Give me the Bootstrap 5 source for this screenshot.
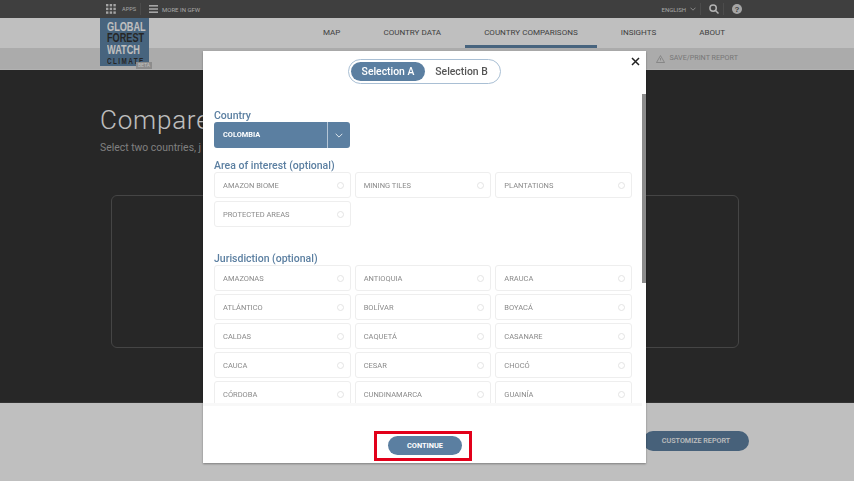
<!DOCTYPE html>
<html>
<head>
    <meta charset="utf-8">
    <title>Global Forest Watch Climate</title>
    <link rel="stylesheet" href="https://cdn.jsdelivr.net/npm/bootstrap@5.3.0/dist/css/bootstrap.min.css">
    <style>
        html, body { height: 100%; }
        body { font-family: Roboto, "Noto Sans", sans-serif; background: #343434; overflow: hidden; }
        .page-wrap { height: 481px; }
        .top-bar { height: 18px; background: #555; padding: 0 112px 0 106px; color: #ddd; font-size: 6px; }
        .top-sep { width: 1px; height: 12px; background: #666; }
        .apps-label { margin-left: 6px; font-size: 5.6px; }
        .main-nav { height: 30px; background: #fff; padding-left: 100px; }
        .logo-box { width: 49px; height: 48px; background: #5f86a8; padding: 4px 0 0 7px; z-index: 2; }
        .logo-text { color: #fff; font-family: "Liberation Sans", sans-serif; font-size: 12.4px; line-height: 11.3px; transform: scaleX(.74); transform-origin: left top; width: 54px; }
        .logo-text b { display: block; font-weight: 700; }
        .logo-text .logo-dark { color: #333; }
        .logo-text .logo-sub { color: #333; font-size: 8.6px; letter-spacing: 1.9px; line-height: 10px; }
        .beta-tag { position: absolute; left: 36px; bottom: -3px; width: 16px; height: 7px; background: #bbb; color: #fff; font-size: 5px; line-height: 7px; text-align: center; }
        .nav-links { margin-left: 155px; }
        .nav-links a { display: block; height: 30px; line-height: 30px; padding: 0 19px; margin-right: 5px; color: #555; font-size: 8.05px; font-weight: 400; text-decoration: none; white-space: nowrap; }
        .nav-links a.active { border-bottom: 3px solid #5f86a8; }
        .sub-bar { height: 22px; background: #e5e5e5; border-bottom: 1px solid #eee; padding-right: 116px; color: #a0a0a0; font-size: 7.2px; font-weight: 400; }
        .dark-part { height: 333px; background: #343434; padding: 34px 0 0 100px; border-bottom: 1px solid #444; }
        .dark-part h1 { width: fit-content; white-space: nowrap; font-size: 26px; font-weight: 300; color: #fff; margin: 0; line-height: 32px; letter-spacing: .8px; }
        .dark-part p { width: fit-content; white-space: nowrap; font-size: 10.4px; color: #aaa; margin: 4px 0 0; line-height: 16px; }
        .map-box { width: 628px; height: 153px; margin: 39px 0 0 11px; border: 1px solid #5c5c5c; border-radius: 6px; }
        .bottom-part { height: 78px; background: #fff; padding: 28px 105px 0 0; }
        .customize-btn { width: 106px; height: 20px; padding: 0; border: 0; border-radius: 10px; background: #5f82a3; color: #fff; font-size: 7.2px; font-weight: 500; line-height: 20px; text-align: center; }
        .modal-backdrop.show { opacity: .25; }
        .pick-dialog { position: absolute; left: 203px; top: 51px; width: 443px; height: 412px; }
        .pick-dialog .modal-content { height: 100%; border: 0; border-radius: 0; box-shadow: 0 1px 2px rgba(0,0,0,.35); }
        .sel-toggle { width: 153px; height: 25px; margin: 8px auto 0; padding: 2px; border: 1px solid #a9bfd4; border-radius: 13px; }
        .sel-toggle span { flex: 1; border-radius: 10px; font-size: 10.4px; line-height: 19px; text-align: center; color: #555; font-weight: 500; }
        .sel-toggle span.on { flex: 0 0 74px; background: #5b7fa1; color: #fff; font-weight: 500; }
        .close-x { position: absolute; right: 6px; top: 6px; width: 9px; height: 9px; }
        .scroll-area { position: absolute; top: 40px; left: 0; right: 0; bottom: 60px; overflow: hidden; padding: 17px 14px 0 11px; }
        .fake-bar { position: absolute; right: 0; top: 3px; width: 4px; height: 189px; background: #8c8c8c; }
        .field-title { font-size: 10.5px; line-height: 13px; padding-top: 1px; font-weight: 500; color: #5b7fa1; }
        .field-title.area-title { margin-top: 10px; }
        .field-title.jur-title { margin-top: 24px; }
        .country-sel { width: 136px; height: 26px; background: #5b7fa1; border-radius: 3px; color: #fff; font-size: 7.4px; font-weight: 700; }
        .country-name { flex: 1; padding-left: 9px; line-height: 26px; }
        .country-arrow { width: 23px; border-left: 1px solid #b5c6d6; text-align: center; height: 26px; }
        .chip-grid { display: grid; grid-template-columns: repeat(3, 136.67px); column-gap: 4px; row-gap: 3px; }
        .chip-item { height: 26px; padding: 1px 6px 0 8px; border: 1px solid #eee; border-radius: 3px; color: #8a8a8a; font-size: 7.5px; font-weight: 400; }
        .chip-dot { width: 7px; height: 7px; border: 1px solid #e4e4e4; border-radius: 50%; }
        .foot-area { position: absolute; left: 0; right: 0; bottom: 0; height: 60px; border-top: 3px solid #f8f8f8; margin-right: 4px; }
        .continue-box { position: absolute; left: 171px; top: 25px; width: 98px; height: 30px; border: 3px solid #e2001a; padding: 2px 11px; }
        .continue-btn { display: block; width: 74px; height: 19px; padding: 1px 0 0; border: 0; border-radius: 10px; background: #5b7fa1; color: #fff; font-size: 7.4px; font-weight: 700; line-height: 18px; }
    </style>
</head>
<body>
    <div class="page-wrap">
        <!-- top bar -->
        <div class="top-bar d-flex align-items-center">
            <svg width="10" height="10" viewBox="0 0 10 10" fill="#ddd">
                <rect x="0" y="0" width="2.4" height="2.4"/><rect x="3.7" y="0" width="2.4" height="2.4"/><rect x="7.4" y="0" width="2.4" height="2.4"/>
                <rect x="0" y="3.7" width="2.4" height="2.4"/><rect x="3.7" y="3.7" width="2.4" height="2.4"/><rect x="7.4" y="3.7" width="2.4" height="2.4"/>
                <rect x="0" y="7.4" width="2.4" height="2.4"/><rect x="3.7" y="7.4" width="2.4" height="2.4"/><rect x="7.4" y="7.4" width="2.4" height="2.4"/>
            </svg>
            <span class="apps-label">APPS</span>
            <span class="top-sep ms-1"></span>
            <svg class="ms-2" width="9" height="8" viewBox="0 0 9 8" fill="#ddd"><rect width="9" height="1.6"/><rect y="3.2" width="9" height="1.6"/><rect y="6.4" width="9" height="1.6"/></svg>
            <span class="ms-1">MORE IN GFW</span>
            <span class="ms-auto">ENGLISH</span>
            <svg class="ms-1" width="6" height="4" viewBox="0 0 6 4" fill="none" stroke="#ddd" stroke-width=".7"><path d="M.5.7 3 3.2 5.5.7"/></svg>
            <span class="top-sep ms-1"></span>
            <svg class="ms-2" width="10" height="10" viewBox="0 0 10 10" fill="none" stroke="#eee" stroke-width="1.5"><circle cx="4.1" cy="4.1" r="3.2"/><path d="m6.5 6.5 3 3"/></svg>
            <span class="top-sep ms-1"></span>
            <svg class="ms-2" width="10" height="10" viewBox="0 0 10 10"><circle cx="5" cy="5" r="5" fill="#ddd"/><text x="5" y="7.8" text-anchor="middle" font-size="8" font-weight="700" fill="#555" font-family="Liberation Sans">?</text></svg>
        </div>

        <!-- main nav -->
        <div class="main-nav d-flex">
            <div class="logo-box position-relative">
                <div class="logo-text">
                    <b>GLOBAL</b>
                    <b class="logo-dark">FOREST</b>
                    <b>WATCH</b>
                    <b class="logo-sub">CLIMATE</b>
                </div>
                <span class="beta-tag">BETA</span>
            </div>
            <div class="nav-links d-flex">
                <a href="#">MAP</a>
                <a href="#">COUNTRY DATA</a>
                <a href="#" class="active">COUNTRY COMPARISONS</a>
                <a href="#">INSIGHTS</a>
                <a href="#">ABOUT</a>
            </div>
        </div>
        <div class="sub-bar d-flex align-items-center justify-content-end">
            <svg class="me-1" width="9" height="8" viewBox="0 0 9 8" fill="none" stroke="#a0a0a0" stroke-width=".7"><path d="M4.5.6 8.5 7.5H.5Z"/><path d="M4.5 3v2.5"/></svg>
            <span>SAVE/PRINT REPORT</span>
        </div>

        <div class="dark-part">
            <h1>Compare</h1>
            <p>Select two countries, j</p>
            <div class="map-box"></div>
        </div>
        <div class="bottom-part d-flex justify-content-end">
            <button type="button" class="customize-btn">CUSTOMIZE REPORT</button>
        </div>
    </div>

    <div class="modal-backdrop show"></div>

    <!-- selection dialog -->
    <div class="modal d-block">
        <div class="pick-dialog">
            <div class="modal-content">
                <div class="sel-toggle d-flex">
                    <span class="on">Selection A</span>
                    <span>Selection B</span>
                </div>
                <svg class="close-x" viewBox="0 0 9 9" stroke="#222" stroke-width="1.5"><path d="M1 1l7 7M8 1 1 8"/></svg>

                <div class="scroll-area">
                    <div class="fake-bar"></div>
                    <div class="field-title">Country</div>
                    <div class="country-sel d-flex">
                        <div class="country-name">COLOMBIA</div>
                        <div class="country-arrow d-flex align-items-center justify-content-center">
                            <svg width="8" height="5" viewBox="0 0 8 5" fill="none" stroke="#fff" stroke-width=".8"><path d="M.7.8 4 4.1 7.3.8"/></svg>
                        </div>
                    </div>
                    <div class="field-title area-title">Area of interest (optional)</div>
                    <div class="chip-grid" id="areaGrid"></div>
                    <div class="field-title jur-title">Jurisdiction (optional)</div>
                    <div class="chip-grid" id="jurGrid"></div>
                </div>

                <div class="foot-area">
                    <div class="continue-box">
                        <button type="button" class="continue-btn">CONTINUE</button>
                    </div>
                </div>
            </div>
        </div>
    </div>

    <script src="https://cdn.jsdelivr.net/npm/bootstrap@5.3.0/dist/js/bootstrap.bundle.min.js"></script>
    <script>
        const areas = ['AMAZON BIOME', 'MINING TILES', 'PLANTATIONS', 'PROTECTED AREAS'];
        const jurisdictions = ['AMAZONAS', 'ANTIOQUIA', 'ARAUCA', 'ATLÁNTICO', 'BOLÍVAR', 'BOYACÁ', 'CALDAS', 'CAQUETÁ', 'CASANARE', 'CAUCA', 'CESAR', 'CHOCÓ', 'CÓRDOBA', 'CUNDINAMARCA', 'GUAINÍA'];

        function fillGrid(id, items) {
            document.getElementById(id).innerHTML = items.map(function(name) {
                return '<div class="chip-item d-flex align-items-center justify-content-between"><span>' + name + '</span><span class="chip-dot"></span></div>';
            }).join('');
        }
        fillGrid('areaGrid', areas);
        fillGrid('jurGrid', jurisdictions);
    </script>
</body>
</html>
